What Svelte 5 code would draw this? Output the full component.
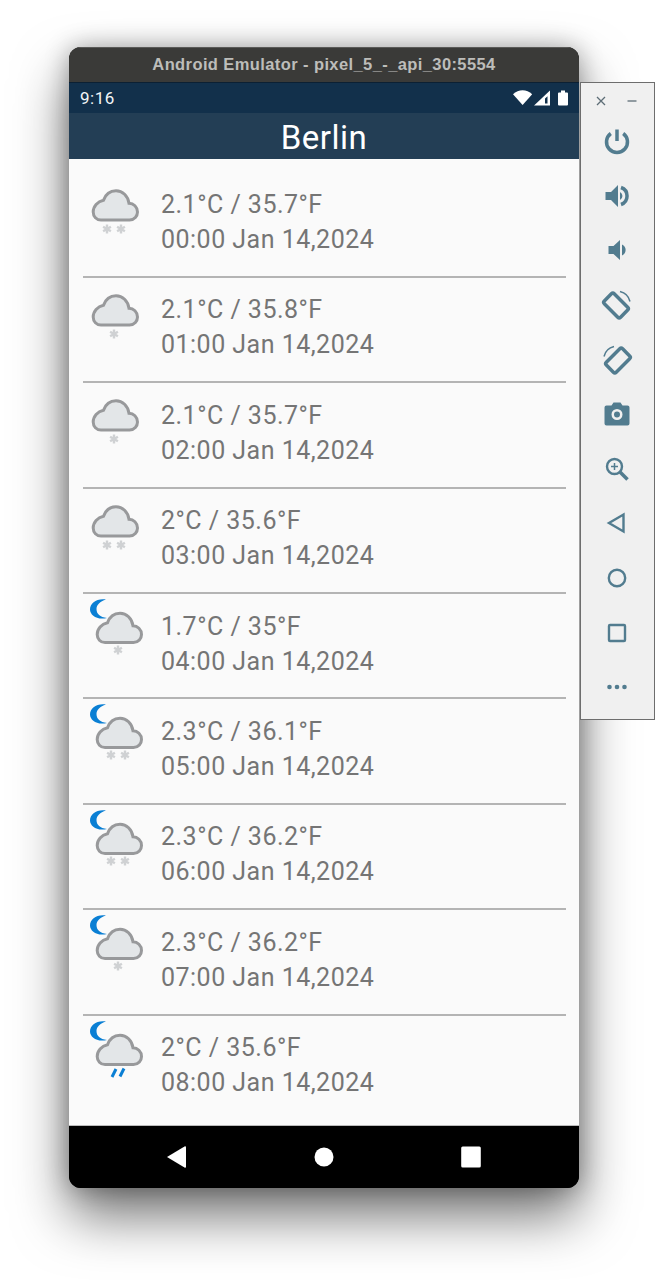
<script>
  const rows = [
    { temp: '2.1°C / 35.7°F', time: '00:00 Jan 14,2024', night: false, fall: 'snow2' },
    { temp: '2.1°C / 35.8°F', time: '01:00 Jan 14,2024', night: false, fall: 'snow1' },
    { temp: '2.1°C / 35.7°F', time: '02:00 Jan 14,2024', night: false, fall: 'snow1' },
    { temp: '2°C / 35.6°F', time: '03:00 Jan 14,2024', night: false, fall: 'snow2' },
    { temp: '1.7°C / 35°F', time: '04:00 Jan 14,2024', night: true, fall: 'snow1' },
    { temp: '2.3°C / 36.1°F', time: '05:00 Jan 14,2024', night: true, fall: 'snow2' },
    { temp: '2.3°C / 36.2°F', time: '06:00 Jan 14,2024', night: true, fall: 'snow2' },
    { temp: '2.3°C / 36.2°F', time: '07:00 Jan 14,2024', night: true, fall: 'snow1' },
    { temp: '2°C / 35.6°F', time: '08:00 Jan 14,2024', night: true, fall: 'rain' },
  ];

  // flake x positions inside the 64px icon box
  function flakes(row) {
    const base = row.night ? 35 : 31;
    return row.fall === 'snow2' ? [base - 7, base + 7] : [base];
  }
</script>

{#snippet flake(x, y)}
  <g transform="translate({x} {y})" class="flake">
    <path d="M0-4.500V4.500M-3.900-2.200L3.900 2.200M-3.900 2.200L3.900-2.200" />
  </g>
{/snippet}

<div class="page">
  <div class="emulator">
    <header class="titlebar">Android Emulator - pixel_5_-_api_30:5554</header>

    <div class="statusbar">
      <span>9:16</span>
      <svg width="56" height="18" viewBox="0 0 56 18" aria-hidden="true">
        <path d="M0 5.200C2.800 2.600 6.200 1.200 9.600 1.200s6.800 1.400 9.600 4L9.600 16z" fill="#fff" />
        <path d="M21 16.500L37 1.500v15z" fill="#fff" />
        <path d="M32 9.500v5h2.500V7.300z" fill="#12304b" />
        <path d="M45 4.500q0-1 1-1h2V1.500h4v2h2q1 0 1 1V15.500q0 1-1 1H46q-1 0-1-1z" fill="#fff" />
      </svg>
    </div>

    <div class="appbar">Berlin</div>

    <main class="list">
      {#each rows as row}
        <article class="row">
          <svg class="weather" width="64" height="66" viewBox="0 0 64 66" aria-hidden="true">
            {#if row.night}
              <path class="moon" d="M23 5.500C14 4 7 9 7 15.500C7 21 14 26.500 24 24C17 23 13.500 20 13.500 15C13.500 11 17 7.500 23 5.500Z" />
            {/if}
            <g transform="translate({row.night ? 13 : 9} {row.night ? 18 : 16.500})">
              <path class="cloud" d="M9 30.500H37.500C42.500 30.500 45.500 26.500 45.500 22.500C45.500 17.500 41.500 13.800 37 13.800C36 6.500 30.500 1.200 24 1.200C18 1.200 13.500 5 11.500 10.800C5.500 12 1.200 17 1.200 22.500C1.200 27 4.500 30.500 9 30.500Z" />
            </g>
            {#if row.fall === 'rain'}
              <path class="rain" d="M33 53L29 61M41 52.500L37 60.500" />
            {:else}
              {#each flakes(row) as x}
                {@render flake(x, 56)}
              {/each}
            {/if}
          </svg>
          <div class="reading">
            <div>{row.temp}</div>
            <div>{row.time}</div>
          </div>
        </article>
      {/each}
    </main>

    <nav class="navbar">
      <svg width="20" height="24" viewBox="0 0 20 24" aria-hidden="true"><path d="M0 12L17.500 1.500q1.500-.7 1.500 1V21.500q0 1.700-1.500 1z" fill="#fff" /></svg>
      <svg width="20" height="20" viewBox="0 0 20 20" aria-hidden="true"><circle cx="10" cy="10" r="9.500" fill="#fff" /></svg>
      <svg width="20" height="22" viewBox="0 0 20 22" aria-hidden="true"><rect x=".2" y=".5" width="19.600" height="21" rx="1.500" fill="#fff" /></svg>
    </nav>
  </div>

  <aside class="toolbar">
    <div class="winctl">
      <svg width="12" height="12" viewBox="0 0 12 12" aria-hidden="true"><path d="M2 2l8 8M10 2l-8 8" /></svg>
      <svg width="12" height="12" viewBox="0 0 12 12" aria-hidden="true"><path d="M1.500 6h9" /></svg>
    </div>
    <div class="tool">
      <svg width="28" height="28" viewBox="0 0 28 28" aria-hidden="true"><path class="line" d="M14 2.500V14M7.800 6.500a10.500 10.500 0 1 0 12.400 0" /></svg>
    </div>
    <div class="tool">
      <svg width="28" height="28" viewBox="0 0 28 28" aria-hidden="true"><path class="solid" d="M2.500 10v8h5.500L15 25V3L8 10z" /><path class="line" d="M18 5.500a9 9 0 0 1 0 17" /><path class="solid" d="M17 10a4.500 4.500 0 0 1 0 8z" /></svg>
    </div>
    <div class="tool">
      <svg width="28" height="28" viewBox="0 0 28 28" aria-hidden="true"><path class="solid" d="M5.500 10v8h5L17 24V4L10.500 10z" /><path class="solid" d="M19 8.500a6 6 0 0 1 0 11z" /></svg>
    </div>
    <div class="tool">
      <svg width="32" height="32" viewBox="0 0 32 32" aria-hidden="true"><rect class="line" x="8" y="5" width="14" height="23" rx="2" transform="rotate(-45 15 16.500)" /><path class="thin" d="M19 2.500a13.500 13.500 0 0 1 10 10" /></svg>
    </div>
    <div class="tool">
      <svg width="32" height="32" viewBox="0 0 32 32" aria-hidden="true"><rect class="line" x="10" y="5" width="14" height="23" rx="2" transform="rotate(45 17 16.500)" /><path class="thin" d="M13 2.500a13.500 13.500 0 0 0-10 10" /></svg>
    </div>
    <div class="tool">
      <svg width="26" height="26" viewBox="0 0 26 26" aria-hidden="true"><path class="solid" fill-rule="evenodd" d="M2.500 4.500h5L9.500 1.500h7l2 3h5q2 0 2 2v16q0 2-2 2h-21q-2 0-2-2v-16q0-2 2-2zM13 8a5.500 5.500 0 1 0 0 11 5.500 5.500 0 0 0 0-11zm0 2.500a3 3 0 1 1 0 6 3 3 0 0 1 0-6z" /></svg>
    </div>
    <div class="tool">
      <svg width="26" height="26" viewBox="0 0 26 26" aria-hidden="true"><circle class="mid" cx="10.500" cy="10.500" r="7.500" /><path class="line" d="M16 16l7.500 7.500" /><path class="thin" d="M10.500 7v7M7 10.500h7" /></svg>
    </div>
    <div class="tool">
      <svg width="26" height="26" viewBox="0 0 26 26" aria-hidden="true"><path class="mid" d="M19.500 4.500V21.500L5 13z" /></svg>
    </div>
    <div class="tool">
      <svg width="26" height="26" viewBox="0 0 26 26" aria-hidden="true"><circle class="mid" cx="13" cy="13" r="8.200" /></svg>
    </div>
    <div class="tool">
      <svg width="26" height="26" viewBox="0 0 26 26" aria-hidden="true"><rect class="mid" x="5" y="5" width="16" height="16" rx="1" /></svg>
    </div>
    <div class="tool">
      <svg width="26" height="26" viewBox="0 0 26 26" aria-hidden="true"><circle class="solid" cx="5.500" cy="13" r="2.300" /><circle class="solid" cx="13" cy="13" r="2.300" /><circle class="solid" cx="20.500" cy="13" r="2.300" /></svg>
    </div>
  </aside>
</div>

<style>
  :global(body) {
    background: #fff;
    overflow: hidden;
  }
  .page {
    width: 655px;
    height: 1280px;
    overflow: hidden;
    display: flex;
    align-items: flex-start;
    padding: 47px 0 0 69px;
    box-sizing: border-box;
    font-family: Roboto, sans-serif;
  }
  .emulator {
    width: 510px;
    height: 1141px;
    flex: none;
    display: flex;
    flex-direction: column;
    border-radius: 12px;
    overflow: hidden;
    background: #000;
    box-shadow: 0 28px 54px rgba(0, 0, 0, 0.55), 0 0 24px rgba(0, 0, 0, 0.3);
  }
  .titlebar {
    height: 35px;
    flex: none;
    background: #3a3a38;
    color: #bdbdba;
    font: 700 16.500px/35px "Liberation Sans", Arial, sans-serif;
    letter-spacing: 0.4px;
    text-align: center;
    box-shadow: inset 0 1px 0 #5a5a58;
  }
  .statusbar {
    height: 31px;
    flex: none;
    background: #12304b;
    color: #f2f5f7;
    font-size: 17px;
    letter-spacing: 0.5px;
    line-height: 33px;
    display: flex;
    align-items: center;
    justify-content: space-between;
    padding: 0 10px 0 11px;
    border-top: 1px solid #0c2033;
    box-sizing: border-box;
  }
  .appbar {
    height: 46px;
    flex: none;
    background: #233e55;
    color: #fff;
    font-size: 33px;
    letter-spacing: 0.5px;
    line-height: 50px;
    text-align: center;
  }
  .list {
    height: 967px;
    flex: none;
    box-sizing: border-box;
    padding: 13.500px 13px 0 14px;
    background: #fafafa;
    border-bottom: 1px solid #bbb;
  }
  .row {
    height: 105.400px;
    box-sizing: border-box;
    border-bottom: 2px solid #b4b4b4;
    display: grid;
    grid-template-columns: 78px 1fr;
  }
  .row:last-child {
    border-bottom: 0;
  }
  .weather {
    display: block;
  }
  .cloud {
    fill: #e3e6e8;
    stroke: #98999b;
    stroke-width: 3;
  }
  .moon {
    fill: #0a7fd4;
  }
  .rain {
    fill: none;
    stroke: #0a7fd4;
    stroke-width: 3;
  }
  .flake path {
    fill: none;
    stroke: #cfd1d3;
    stroke-width: 2.400;
  }
  .reading {
    padding-top: 14.500px;
    color: #757575;
    font-size: 25px;
    letter-spacing: 0.48px;
    line-height: 35px;
  }
  .navbar {
    flex: 1;
    background: #000;
    display: grid;
    grid-template-columns: repeat(3, 147px);
    justify-content: center;
    justify-items: center;
    align-items: center;
  }
  .toolbar {
    position: relative;
    width: 75px;
    height: 638px;
    flex: none;
    margin: 35px 0 0 1px;
    box-sizing: border-box;
    background: #f0f0f0;
    border: 1px solid #6d6d6d;
    color: #527c8f;
  }
  .winctl {
    height: 31px;
    display: flex;
    justify-content: space-between;
    align-items: center;
    padding: 4px 16px 0 14px;
    box-sizing: border-box;
  }
  .winctl path {
    fill: none;
    stroke: #5d6d76;
    stroke-width: 1.300;
  }
  .tool {
    height: 54.600px;
    padding-right: 2px;
    box-sizing: border-box;
    display: flex;
    align-items: center;
    justify-content: center;
  }
  .line, .thin, .mid {
    fill: none;
    stroke: #527c8f;
  }
  .line {
    stroke-width: 3.500;
  }
  .thin {
    stroke-width: 1.500;
  }
  .mid {
    stroke-width: 2.400;
  }
  .solid {
    fill: #527c8f;
  }
</style>
